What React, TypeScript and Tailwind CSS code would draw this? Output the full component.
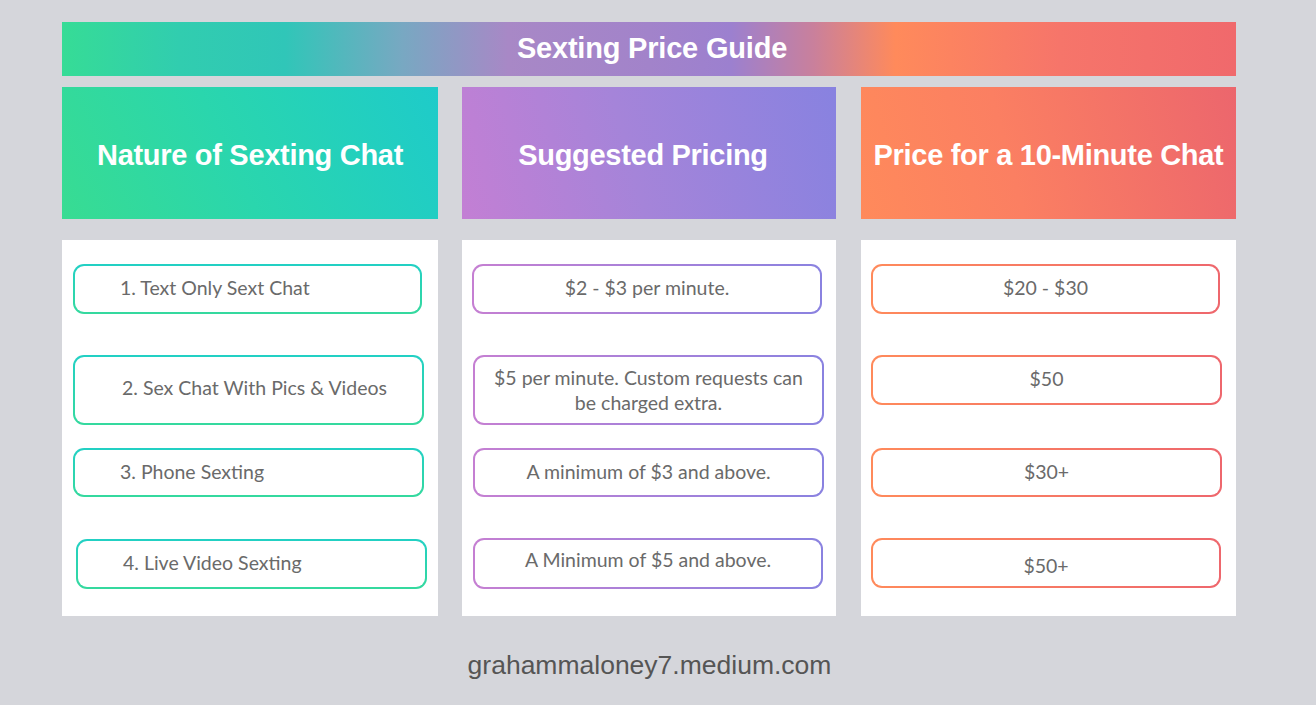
import React from "react";

type Box = { text: React.ReactNode; cls: string; inner?: string };

const bodyFont = { fontFamily: "Lato, 'Open Sans', sans-serif" };
const headFont = { fontFamily: "'Liberation Sans', Arial, sans-serif" };

function GBox({ box, grad, align }: { box: Box; grad: string; align: "left" | "center" }) {
  return (
    <div className={`shrink-0 rounded-[11px] p-[2px] ${grad} ${box.cls}`}>
      <div
        className={`flex h-full w-full items-center rounded-[9px] bg-white text-[19.5px] leading-[25px] text-[#6a6a6a] ${
          align === "left" ? "justify-start pl-[45px]" : "justify-center px-[12px] text-center"
        } ${box.inner ?? "pb-[3px]"}`}
        style={bodyFont}
      >
        {box.text}
      </div>
    </div>
  );
}

export default function App() {
  const col1: Box[] = [
    { text: "1. Text Only Sext Chat", cls: "mt-[24px] ml-[11px] w-[349px] h-[50px]" },
    { text: "2. Sex Chat With Pics & Videos", cls: "mt-[41px] ml-[11px] w-[351px] h-[70px]", inner: "pl-[47px] pb-[5px]" },
    { text: "3. Phone Sexting", cls: "mt-[23px] ml-[11px] w-[351px] h-[49px]" },
    { text: "4. Live Video Sexting", cls: "mt-[42px] ml-[14px] w-[351px] h-[50px]" },
  ];
  const col2: Box[] = [
    { text: "$2 - $3 per minute.", cls: "mt-[24px] ml-[10px] w-[350px] h-[50px]" },
    {
      text: (
        <span>
          $5 per minute. Custom requests can
          <br />
          be charged extra.
        </span>
      ),
      cls: "mt-[41px] ml-[11px] w-[351px] h-[70px]",
      inner: "pb-[0px]",
    },
    { text: "A minimum of $3 and above.", cls: "mt-[23px] ml-[11px] w-[351px] h-[49px]" },
    { text: "A Minimum of $5 and above.", cls: "mt-[41px] ml-[11px] w-[350px] h-[51px]", inner: "pb-[8px]" },
  ];
  const col3: Box[] = [
    { text: "$20 - $30", cls: "mt-[24px] ml-[10px] w-[349px] h-[50px]" },
    { text: "$50", cls: "mt-[41px] ml-[10px] w-[351px] h-[50px]" },
    { text: "$30+", cls: "mt-[43px] ml-[10px] w-[351px] h-[49px]" },
    { text: "$50+", cls: "mt-[41px] ml-[10px] w-[350px] h-[50px]", inner: "pt-[4px]" },
  ];

  const headers = [
    {
      title: "Nature of Sexting Chat",
      cls: "w-[376px] bg-[linear-gradient(65deg,#38dc92_0%,#2ad6ad_45%,#1ecbca_100%)]",
    },
    {
      title: "Suggested Pricing",
      cls: "ml-[24px] w-[374px] pr-[12px] bg-[linear-gradient(75deg,#c37fd4_0%,#a584d9_45%,#8882e0_100%)]",
    },
    {
      title: "Price for a 10-Minute Chat",
      cls: "ml-[25px] w-[375px] bg-[linear-gradient(75deg,#ff8a5b_0%,#fb7f62_40%,#ec666d_100%)]",
    },
  ];

  const cols = [
    { boxes: col1, cls: "w-[376px]", grad: "bg-[linear-gradient(180deg,#22d0c4_0%,#35d99e_100%)]", align: "left" as const },
    { boxes: col2, cls: "ml-[24px] w-[374px]", grad: "bg-[linear-gradient(90deg,#c57fd2_0%,#8a82e0_100%)]", align: "center" as const },
    { boxes: col3, cls: "ml-[25px] w-[375px]", grad: "bg-[linear-gradient(90deg,#ff8a5b_0%,#ee676d_100%)]", align: "center" as const },
  ];

  return (
    <div className="h-[705px] w-[1316px] overflow-hidden bg-[#d5d6db] pl-[62px] pt-[22px]">
      <div className="w-[1174px]">
        <div className="flex h-[54px] items-center justify-center bg-[linear-gradient(90deg,#36dc96_0%,#31cdaf_10%,#30c6b8_19%,#78a8c2_29%,#a888c6_38%,#a283ca_50%,#9c80cf_57%,#c9809c_64%,#ff8a5b_71%,#f6756a_85%,#f0696c_100%)]">
          <span className="pl-[6px] text-[29px] font-bold tracking-[-0.2px] text-white" style={headFont}>
            Sexting Price Guide
          </span>
        </div>

        <div className="mt-[11px] flex">
          {headers.map((h) => (
            <div key={h.title} className={`flex h-[132px] shrink-0 items-center justify-center pt-[6px] ${h.cls}`}>
              <span className="text-[29px] font-bold tracking-[-0.3px] text-white" style={headFont}>
                {h.title}
              </span>
            </div>
          ))}
        </div>

        <div className="mt-[21px] flex">
          {cols.map((c, i) => (
            <div key={i} className={`flex h-[376px] shrink-0 flex-col bg-white ${c.cls}`}>
              {c.boxes.map((b, j) => (
                <GBox key={j} box={b} grad={c.grad} align={c.align} />
              ))}
            </div>
          ))}
        </div>

        <div className="mt-[33px] flex justify-center pl-[1px]">
          <span className="text-[26.5px] leading-[32px] text-[#555555]" style={headFont}>
            grahammaloney7.medium.com
          </span>
        </div>
      </div>
    </div>
  );
}
